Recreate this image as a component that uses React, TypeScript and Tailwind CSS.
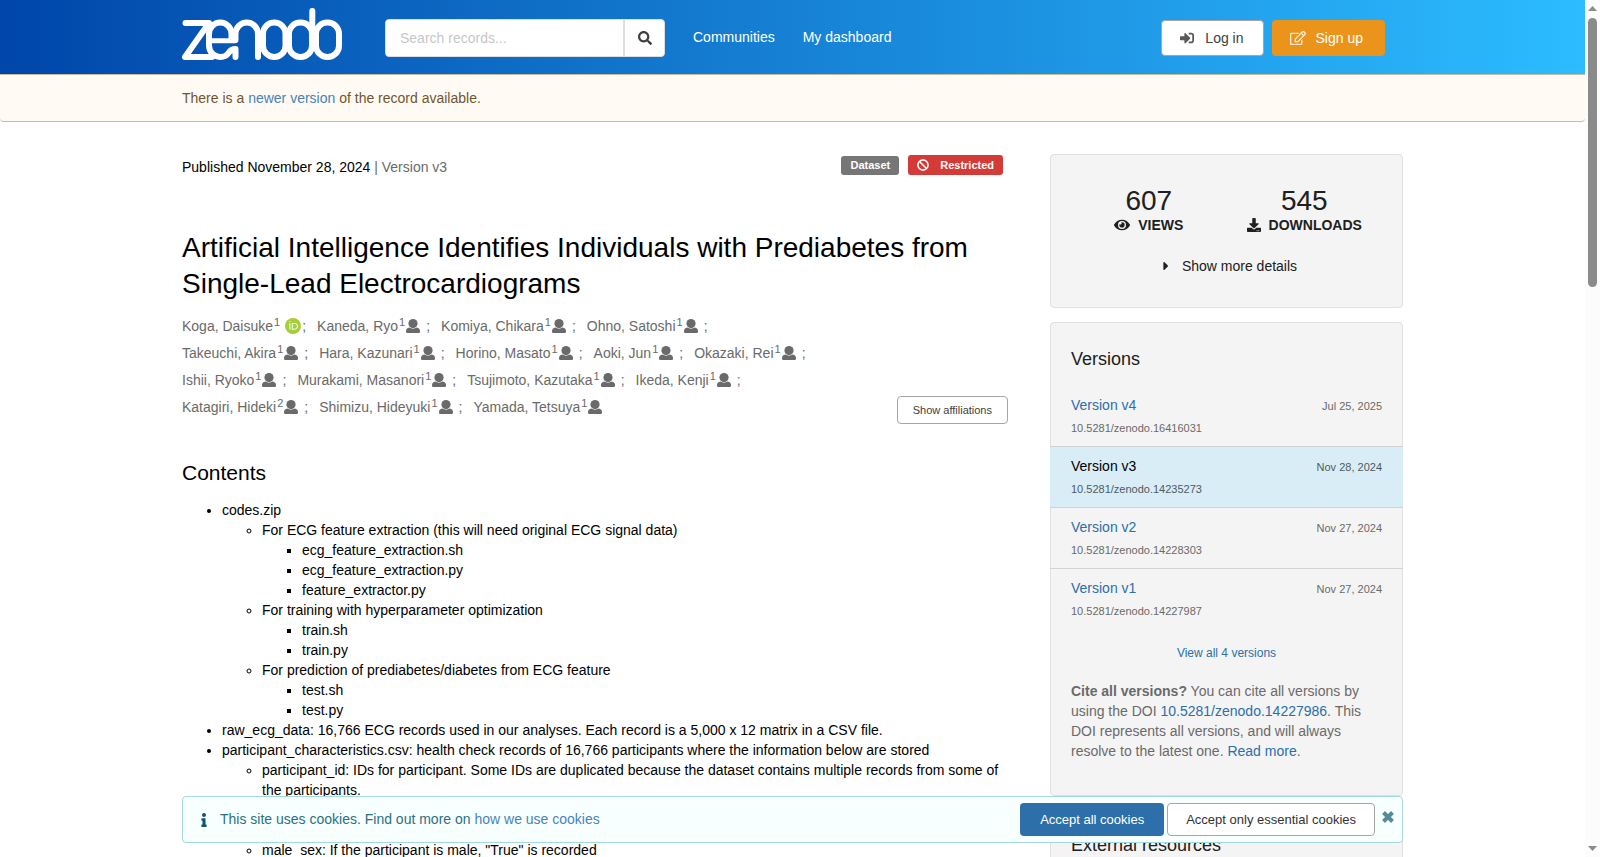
import {
  FaBan,
  FaCaretRight,
  FaDownload,
  FaEye,
  FaInfo,
  FaRegEdit,
  FaSearch,
  FaSignInAlt
} from 'react-icons/fa';

interface Author {
  name: string;
  affiliation: number;
  orcid?: boolean;
}

interface Version {
  label: string;
  date: string;
  doi: string;
  current?: boolean;
}

interface ContentNode {
  text: string;
  children?: ContentNode[];
}

const authors: Author[] = [
  { name: 'Koga, Daisuke', affiliation: 1, orcid: true },
  { name: 'Kaneda, Ryo', affiliation: 1 },
  { name: 'Komiya, Chikara', affiliation: 1 },
  { name: 'Ohno, Satoshi', affiliation: 1 },
  { name: 'Takeuchi, Akira', affiliation: 1 },
  { name: 'Hara, Kazunari', affiliation: 1 },
  { name: 'Horino, Masato', affiliation: 1 },
  { name: 'Aoki, Jun', affiliation: 1 },
  { name: 'Okazaki, Rei', affiliation: 1 },
  { name: 'Ishii, Ryoko', affiliation: 1 },
  { name: 'Murakami, Masanori', affiliation: 1 },
  { name: 'Tsujimoto, Kazutaka', affiliation: 1 },
  { name: 'Ikeda, Kenji', affiliation: 1 },
  { name: 'Katagiri, Hideki', affiliation: 2 },
  { name: 'Shimizu, Hideyuki', affiliation: 1 },
  { name: 'Yamada, Tetsuya', affiliation: 1 }
];

const versions: Version[] = [
  { label: 'Version v4', date: 'Jul 25, 2025', doi: '10.5281/zenodo.16416031' },
  { label: 'Version v3', date: 'Nov 28, 2024', doi: '10.5281/zenodo.14235273', current: true },
  { label: 'Version v2', date: 'Nov 27, 2024', doi: '10.5281/zenodo.14228303' },
  { label: 'Version v1', date: 'Nov 27, 2024', doi: '10.5281/zenodo.14227987' }
];

const contents: ContentNode[] = [
  {
    text: 'codes.zip',
    children: [
      {
        text: 'For ECG feature extraction (this will need original ECG signal data)',
        children: [
          { text: 'ecg_feature_extraction.sh' },
          { text: 'ecg_feature_extraction.py' },
          { text: 'feature_extractor.py' }
        ]
      },
      {
        text: 'For training with hyperparameter optimization',
        children: [{ text: 'train.sh' }, { text: 'train.py' }]
      },
      {
        text: 'For prediction of prediabetes/diabetes from ECG feature',
        children: [{ text: 'test.sh' }, { text: 'test.py' }]
      }
    ]
  },
  { text: 'raw_ecg_data: 16,766 ECG records used in our analyses. Each record is a 5,000 x 12 matrix in a CSV file.' },
  {
    text: 'participant_characteristics.csv: health check records of 16,766 participants where the information below are stored',
    children: [
      {
        text: 'participant_id: IDs for participant. Some IDs are duplicated because the dataset contains multiple records from some of the participants.'
      },
      { text: 'ecg_id: IDs for ECG records' },
      { text: 'age: age of the participant' },
      { text: 'male_sex: If the participant is male, "True" is recorded' }
    ]
  }
];

const listStyles = ['list-disc', 'list-[circle]', 'list-[square]'];

function Logo() {
  return (
    <svg width="160" height="52" viewBox="0 0 160 52" fill="none" stroke="#fff" strokeWidth="6" strokeLinecap="round" strokeLinejoin="round">
      <path d="M3.5 15H27L3 49H30" />
      <path d="M27 32.700H53" strokeWidth="5" />
      <path d="M49.500 32V26A11.250 11.500 0 0 0 27 26V37.500A11.250 11.500 0 0 0 38.500 49Q44 49 46.500 45Q49 41 53.500 41V49" />
      <path d="M53.500 32V26A11.250 11.500 0 0 1 76 26V49" />
      <rect x="81" y="14.500" width="22.500" height="34.500" rx="11.250" />
      <rect x="107" y="14.500" width="23" height="34.500" rx="11.250" />
      <path d="M130.300 3V30" />
      <rect x="134" y="14.500" width="23" height="34.500" rx="11.250" />
    </svg>
  );
}

function OrcidIcon() {
  return (
    <svg width="16" height="16" viewBox="0 0 256 256" className="ml-[5px]" role="img" aria-label="ORCID">
      <circle cx="128" cy="128" r="128" fill="#a6ce39" />
      <path fill="#fff" d="M71 79h15v107H71zM109 79h41c40 0 57 28 57 54 0 27-21 54-57 54h-41zm15 14v80h24c35 0 43-26 43-40 0-22-14-40-45-40z" />
      <circle cx="78.500" cy="57" r="10" fill="#fff" />
    </svg>
  );
}

function UserIcon() {
  return (
    <svg width="14" height="14" viewBox="0 0 14 14" fill="currentColor" className="ml-px" aria-hidden="true">
      <circle cx="7" cy="4.600" r="4.600" />
      <path d="M3.300 8.500Q7 10.800 10.700 8.500Q14 9 14 12V12.800Q14 14 12.800 14H1.200Q0 14 0 12.800V12Q0 9 3.300 8.500z" />
    </svg>
  );
}

function Header() {
  return (
    <header className="bg-[linear-gradient(90deg,#0046aa,#2cbcff)]">
      <div className="mx-auto flex h-[74px] w-full max-w-[1221px] items-center pr-[18px]">
        <a href="#" aria-label="Zenodo" className="pb-[6px]">
          <Logo />
        </a>
        <form className="mt-[2px] ml-[43px] flex h-[38px] w-[280px] overflow-hidden rounded border border-[#dedede] bg-white" onSubmit={(e) => e.preventDefault()}>
          <input
            type="text"
            aria-label="Search records"
            placeholder="Search records..."
            className="min-w-0 flex-1 px-[14px] text-[14px] outline-none placeholder:text-[#c7c7c7]"
          />
          <button type="submit" aria-label="Search" className="flex w-[41px] items-center justify-center border-l-2 border-[#dedede] text-[#404040]">
            <FaSearch size={14} />
          </button>
        </form>
        <nav className="ml-7 flex gap-7 text-white">
          <a href="#">Communities</a>
          <a href="#">My dashboard</a>
        </nav>
        <div className="mt-[2px] ml-auto flex gap-2">
          <button className="flex h-9 items-center gap-[11px] rounded border border-[#a5a5a5] bg-white pr-[19px] pl-[18px] text-[#404040]">
            <FaSignInAlt size={14} className="text-[#595959]" />
            Log in
          </button>
          <button className="flex h-9 items-center gap-[10px] rounded bg-[#eb941b] pr-[22px] pl-[18px] text-white">
            <FaRegEdit size={16} className="opacity-80" />
            Sign up
          </button>
        </div>
      </div>
    </header>
  );
}

function ContentList({ nodes, depth = 0 }: { nodes: ContentNode[]; depth?: number }) {
  return (
    <ul className={`pl-10 ${listStyles[depth]}`}>
      {nodes.map((node) => (
        <li key={node.text}>
          {node.text}
          {node.children && <ContentList nodes={node.children} depth={depth + 1} />}
        </li>
      ))}
    </ul>
  );
}

function Record() {
  return (
    <main className="min-w-0 flex-1 text-black">
      <div className="flex h-[27px] items-center justify-between pr-[5px]">
        <p className="pb-[2px] text-[#6a6a6a]">
          <span className="text-black">Published November 28, 2024</span> | Version v3
        </p>
        <div className="flex items-end gap-[9px] pb-[5px] text-[11px] leading-5 font-bold text-white">
          <span className="rounded-[3px] bg-[#767676] px-[9px] leading-[19px]">Dataset</span>
          <span className="flex items-center gap-[11px] rounded-[3px] bg-[#d43a36] px-[9px]">
            <FaBan size={12} />
            Restricted
          </span>
        </div>
      </div>

      <h1 className="mt-[49px] text-[28px] leading-9">
        Artificial Intelligence Identifies Individuals with Prediabetes from Single-Lead Electrocardiograms
      </h1>

      <div className="mt-[10px] flex items-end justify-between">
        <ul className="flex max-w-[650px] flex-wrap gap-x-[11px] text-[#6a6a6a]">
          {authors.map((author, i) => (
            <li key={author.name} className="flex h-[27px] items-center">
              <a href="#">{author.name}</a>
              <sup className="static ml-px pb-2 text-[11px]">{author.affiliation}</sup>
              {author.orcid ? <OrcidIcon /> : <UserIcon />}
              {i < authors.length - 1 && <span className={author.orcid ? 'ml-px' : 'ml-[6px]'}>;</span>}
            </li>
          ))}
        </ul>
        <button className="mb-[-4px] h-7 rounded border border-[#a5a5a5] bg-white px-[15px] text-[11px] text-[#404040]">
          Show affiliations
        </button>
      </div>

      <h2 className="mt-10 text-[21px] leading-[26px]">Contents</h2>
      <div className="mt-[14px]">
        <ContentList nodes={contents} />
      </div>
    </main>
  );
}

function Sidebar() {
  return (
    <aside className="flex w-[353px] shrink-0 flex-col gap-[14px] text-[#202020]">
      <section className="rounded border border-[#e0e0e0] bg-[#f4f4f4] px-5 pt-7 pb-[19px]">
        <div className="grid grid-cols-2">
          <div className="flex flex-col items-center">
            <span className="text-[28px] leading-9">607</span>
            <span className="flex h-3 items-center gap-2 font-bold">
              <FaEye size={16} />
              VIEWS
            </span>
          </div>
          <div className="flex flex-col items-center">
            <span className="text-[28px] leading-9">545</span>
            <span className="flex h-3 items-center gap-2 font-bold">
              <FaDownload size={14} />
              DOWNLOADS
            </span>
          </div>
        </div>
        <button className="mx-auto mt-[25px] mb-[8px] flex items-center gap-[9px] pb-1 pl-[3px]">
          <FaCaretRight size={14} />
          Show more details
        </button>
      </section>

      <section className="rounded border border-[#e0e0e0] bg-[#f4f4f4] pb-[34px]">
        <h2 className="px-5 pt-6 text-[18px] leading-6">Versions</h2>
        <ul className="mt-[14px]">
          {versions.map((version, i) => (
            <li
              key={version.label}
              className={`-mx-px h-[61px] border-t px-[21px] pt-2 ${i > 0 ? 'border-[#d0d2d4]' : 'border-transparent'} ${
                version.current ? 'bg-[#d9edf7] text-[#4f5a60]' : 'text-[#6a6a6a]'
              }`}
            >
              <div className="flex items-center justify-between">
                {version.current ? (
                  <span className="text-black">{version.label}</span>
                ) : (
                  <a href="#" className="text-[#2d6fa9]">{version.label}</a>
                )}
                <span className="pt-[2px] text-[11px]">{version.date}</span>
              </div>
              <p className="pt-[2px] text-[11px]">{version.doi}</p>
            </li>
          ))}
        </ul>
        <p className="mt-[14px] text-center text-[12px]">
          <a href="#" className="text-[#2d6fa9]">View all 4 versions</a>
        </p>
        <p className="mt-[18px] px-5 text-[#6a6a6a]">
          <strong>Cite all versions?</strong> You can cite all versions by using the DOI{' '}
          <a href="#" className="text-[#2d6fa9]">10.5281/zenodo.14227986</a>. This DOI represents all versions, and will
          always resolve to the latest one. <a href="#" className="text-[#2d6fa9]">Read more</a>.
        </p>
      </section>

      <section className="rounded border border-[#e0e0e0] bg-[#f4f4f4] px-5 pt-[22px] pb-7">
        <h2 className="text-[18px] leading-6">External resources</h2>
      </section>
    </aside>
  );
}

function CookieBanner() {
  return (
    <div className="absolute inset-x-0 bottom-[14px]">
      <div
        role="dialog"
        aria-label="Cookies"
        className="mx-auto flex h-[47px] w-full max-w-[1221px] items-center rounded border border-[#a3d8de] bg-[#f8ffff] pr-2 pl-[14px] text-[#2c6f82]"
      >
        <FaInfo size={14} className="text-[#0e566c]" />
        <p className="ml-[9px] pb-px">
          This site uses cookies. Find out more on <a href="#" className="text-[#4a83b5]">how we use cookies</a>
        </p>
        <div className="ml-auto flex items-center gap-[3px] text-[13px]">
          <button className="h-[33px] rounded bg-[#2d6fa9] px-5 text-white">Accept all cookies</button>
          <button className="h-[33px] rounded border border-[#a5a5a5] bg-white px-[18px] text-[#333]">
            Accept only essential cookies
          </button>
        </div>
        <button aria-label="Close" className="ml-[7px] pb-[6px] text-[#548b99]">
          <svg width="12" height="12" viewBox="0 0 12 12" stroke="currentColor" strokeWidth="4">
            <path d="M1.500 1.500L10.500 10.500M10.500 1.500L1.500 10.500" />
          </svg>
        </button>
      </div>
    </div>
  );
}

function Scrollbar() {
  return (
    <div className="flex w-[15px] shrink-0 flex-col items-center justify-between bg-[#fcfcfc] py-[6px]" aria-hidden="true">
      <div className="flex w-full flex-1 flex-col items-center">
        <svg width="9" height="5" viewBox="0 0 9 5" fill="#8b8b8b">
          <path d="M0 5L4.500 0L9 5z" />
        </svg>
        <div className="mt-[7px] h-[32%] w-[9px] rounded-full bg-[#8b8b8b]" />
      </div>
      <svg width="9" height="5" viewBox="0 0 9 5" fill="#8b8b8b">
        <path d="M0 0L4.500 5L9 0z" />
      </svg>
    </div>
  );
}

export default function App() {
  return (
    <div className="flex h-screen overflow-hidden bg-white font-['Liberation_Sans',Arial,sans-serif] text-[14px] leading-5">
      <div className="relative min-w-0 flex-1 overflow-hidden">
        <Header />
        <div className="rounded-b border-y border-[#c9ba9b] bg-[#fffaf3] py-[13px] text-[#6f5630]">
          <p className="mx-auto w-full max-w-[1221px]">
            There is a <a href="#" className="text-[#4a83b5]">newer version</a> of the record available.
          </p>
        </div>
        <div className="mx-auto flex w-full max-w-[1221px] gap-[42px] pt-8">
          <Record />
          <Sidebar />
        </div>
        <CookieBanner />
      </div>
      <Scrollbar />
    </div>
  );
}
